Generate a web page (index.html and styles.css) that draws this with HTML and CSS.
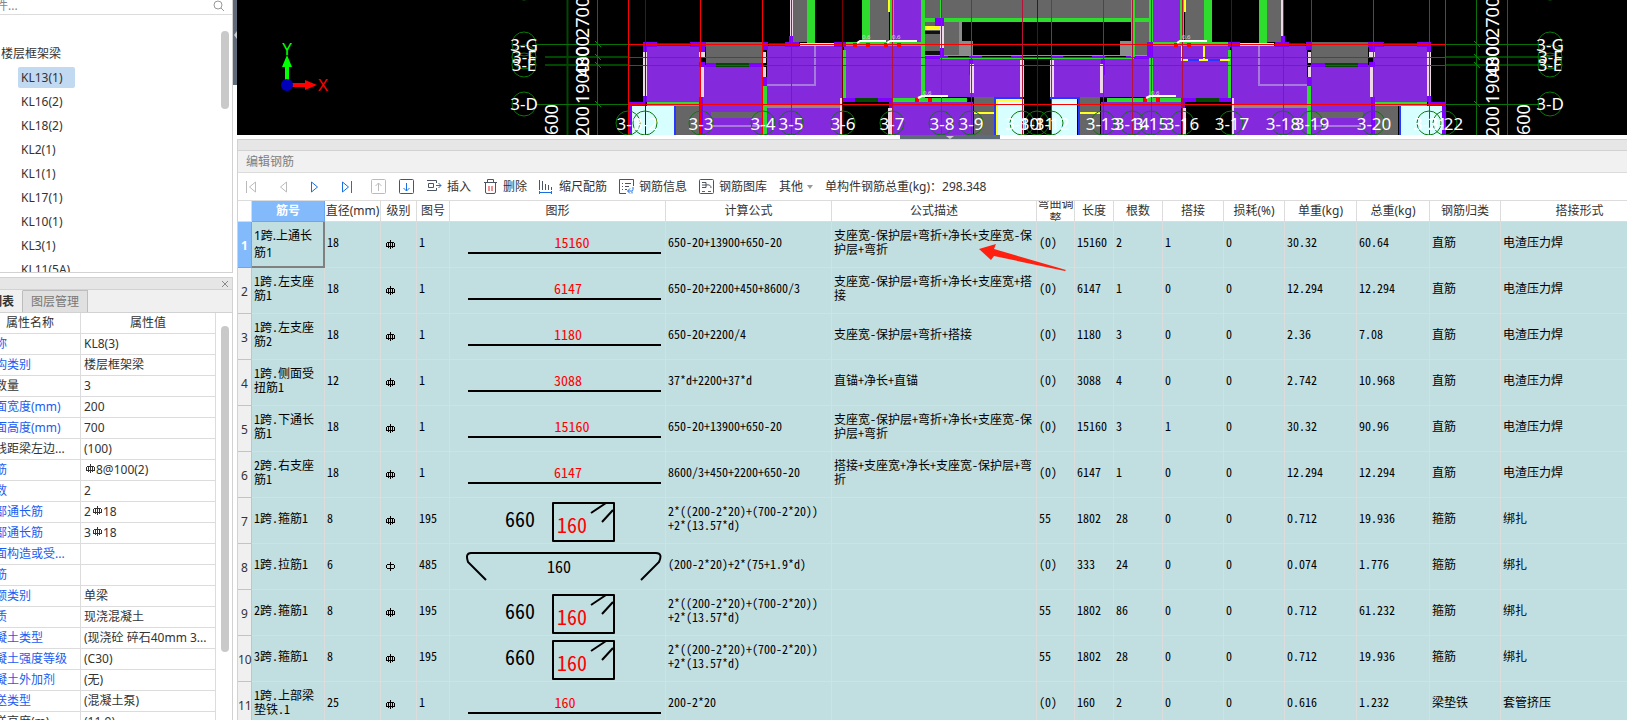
FILE: index.html
```html
<!DOCTYPE html>
<html lang="zh-CN">
<head>
<meta charset="utf-8">
<title>编辑钢筋</title>
<link rel="stylesheet" href="styles.css">
</head>
<body>
<svg class="defs" aria-hidden="true">
  <defs>
  <path id="rebar3" d="M4.500 0v9M1 2.500h7M.5 3v3M8.500 3v3M0 6.500h9M2.500 3v5M6.500 3v5"/>
  <path id="rebar1" d="M4.500 0v9M1 2.500h7M.5 3v3M8.500 3v3M1 6.500h7"/>
  <path id="bar" d="M18 31H211"/>
  <path id="stirrup" stroke-linejoin="round" d="M103 5H164V43H103ZM141 15L156 5M152 24L163 12"/>
  </defs>
</svg>
<aside class="side">
  <section class="tree">
    <div class="search"><input type="text" aria-label="搜索构件" placeholder="件...">
      <svg class="glass" viewBox="0 0 12 12"><circle cx="5" cy="5" r="4"/><path d="M8 8l3 3"/></svg></div>
    <div class="treebody">
      <ul class="items">
        <li class="group">楼层框架梁</li>
        <li><a href="#" class="sel">KL13(1)</a></li>
        <li><a href="#">KL16(2)</a></li>
        <li><a href="#">KL18(2)</a></li>
        <li><a href="#">KL2(1)</a></li>
        <li><a href="#">KL1(1)</a></li>
        <li><a href="#">KL17(1)</a></li>
        <li><a href="#">KL10(1)</a></li>
        <li><a href="#">KL3(1)</a></li>
        <li><a href="#">KL11(5A)</a></li>
      </ul>
      <div class="track"><div class="thumb t1"></div></div>
    </div>
  </section>
  <section class="props">
    <div class="closebar"><button class="close" aria-label="关闭"><svg viewBox="0 0 8 8"><path d="M1 1l6 6M7 1L1 7"/></svg></button></div>
    <div class="tabs"><button class="tab on">列表</button><button class="tab">图层管理</button></div>
    <div class="propbody">
      <table class="ptable">
        <thead><tr><th>属性名称</th><th>属性值</th></tr></thead>
        <tbody>
        <tr><td>称</td><td>KL8(3)</td></tr>
        <tr><td>构类别</td><td>楼层框架梁</td></tr>
        <tr><td class="k">数量</td><td>3</td></tr>
        <tr><td>面宽度(mm)</td><td>200</td></tr>
        <tr><td>面高度(mm)</td><td>700</td></tr>
        <tr><td class="k">线距梁左边...</td><td>(100)</td></tr>
        <tr><td>筋</td><td><svg class="rb"><use href="#rebar3"/></svg>8@100(2)</td></tr>
        <tr><td>数</td><td>2</td></tr>
        <tr><td>部通长筋</td><td>2<svg class="rb"><use href="#rebar3"/></svg>18</td></tr>
        <tr><td>部通长筋</td><td>3<svg class="rb"><use href="#rebar3"/></svg>18</td></tr>
        <tr><td>面构造或受...</td><td></td></tr>
        <tr><td>筋</td><td></td></tr>
        <tr><td>额类别</td><td>单梁</td></tr>
        <tr><td>质</td><td>现浇混凝土</td></tr>
        <tr><td>凝土类型</td><td>(现浇砼 碎石40mm 3...</td></tr>
        <tr><td>凝土强度等级</td><td>(C30)</td></tr>
        <tr><td>凝土外加剂</td><td>(无)</td></tr>
        <tr><td>送类型</td><td>(混凝土泵)</td></tr>
        <tr><td class="k">送高度(m)</td><td>(11.9)</td></tr>
        </tbody>
      </table>
      <div class="track"><div class="thumb t2"></div></div>
    </div>
  </section>
</aside>
<div class="gutter"><div class="grip"><svg viewBox="0 0 4 8"><path d="M4 0v8L1 4z"/></svg></div></div>
<main class="main">
<svg class="cad" viewBox="237 0 1390 135" preserveAspectRatio="xMidYMid slice">
  <rect x="237" width="1390" height="135" fill="#000"/>
  <g id="wing">
    <path class="gy" d="M793 0h14v42h-14zM870 0h19v42h-19zM676 104h25v31h-25zM974 97h22v38h-22z"/>
    <path class="pu" d="M645 45h55v57h-55zM701 66h63v69h-63zM767 46h75v89h-75zM844 46h78v52h-78zM894 0h27v42h-27zM925 59h97v38h-97zM893 102h80v33h-80z"/>
    <path class="gy" d="M706 42h57v22h-57zM711 112h52v6h-52z"/>
    <path fill="#d8ffff" d="M630 106h44v29h-44zM997 99h26v36h-26z"/>
    <path fill="#8000ff" d="M628 102h18v4h-18zM628 102h4v33h-4zM643 42h14v5h-14zM643 42h4v60h-4zM690 42h16v5h-16zM699 47h6v5h-6zM699 62h6v5h-6zM699 97h4v38h-4zM706 63h10v4h-10zM749 63h14v4h-14zM762 42h6v8h-6zM762 77h5v10h-5zM785 42h14v5h-14zM789 36h4v10h-4zM834 42h12v5h-12zM843 98h50v4h-50zM889 98h4v10h-4zM925 55h23v4h-23zM969 55h13v4h-13zM969 55h4v20h-4zM1011 55h12v4h-12z"/>
    <path fill="#054805" d="M657 43h34v3h-34zM769 43h16v3h-16zM716 63h33v4h-33zM855 98h23v4h-23z"/>
    <path fill="#000" d="M846 102h42v33h-42z"/>
    <path class="gr" d="M807 0h8v43h-8zM862 0h8v42h-8zM890 0h4v42h-4zM921 0h4v98h-4zM842 50h4v48h-4zM763 86h4v49h-4zM647 102h52v4h-52zM893 98h74v4h-74zM846 42h75v4h-75zM925 18h113v4h-113zM925 55h113v1h-113zM940 58h98v1h-98z"/>
    <path fill="#99857d" d="M767 104h73v4h-73z"/>
    <path fill="#eed8e8" d="M643 52h4v44h-4zM699 52h6v5h-6zM700 67h4v30h-4zM763 52h3v11h-3zM763 67h3v10h-3zM790 0h3v36h-3zM800 43h34v3h-34zM840 98h3v37h-3zM888 108h4v27h-4zM970 64h4v29h-4zM1020 60h4v37h-4z"/>
    <path fill="none" stroke="#a779dd" stroke-width="2" d="M767 85h48V46M712 126h51"/>
    <path fill="#ff2" d="M888 0h2v12h-2zM974 112h22v2h-22z"/>
  </g>
  <use href="#wing" transform="matrix(-1 0 0 1 2074 0)"/>
  <path fill="#000" d="M1025 59h24v76h-24zM962 22h168v33H962z"/>
  <path class="gy" d="M925 0h206v18H925zM1135 0h14v18h-14zM925 22h37v33h-37zM1135 22h14v33h-14z"/>
  <path fill="#8b8b8b" d="M959 22h3v33h-3zM962 41h11v14h-11zM1120 41h11v14h-11z"/>
  <path fill="#ff2" d="M925 26h16v4h-16z"/>
  <path fill="#111" d="M925 31h15v3h-15zM925 51h15v4h-15z"/>
  <path fill="#8000ff" d="M935 18h9v8h-9zM940 48h4v10h-4zM1147 42h6v16h-6z"/>
  <path fill="#eed8e8" d="M940 26h4v22h-4z"/>
  <path class="gr" d="M1131 0h4v57h-4zM940 0h2v18h-2z"/>
  <path fill="none" stroke="#2438ff" stroke-width="2" d="M675 106v29M995 135V98h28M1050 98h29v37M1400 106v29M1182 60h48"/>
  <path fill="none" stroke="#ff2" stroke-width="2" d="M997 135V100h26v35M1182 46v14h6M1204 46v14M1199 60h9M1220 60h10"/>
  <path fill="none" stroke="#004800" stroke-width="2" d="M545 57h83M545 65h83M567.5 0v135M1446 57h104M1446 65h104"/>
  <path fill="none" stroke="#087208" d="M536 44.500h93M536 104.500h93M1446 44.500h94M1446 104.500h94M597.500 0v135M1476.500 0v135M1507.500 0v135"/>
  <path fill="none" stroke="#088808" d="M595 41l6 6M595 54l6 6M595 62l6 6M595 101l6 6M1474 41l6 6M1474 54l6 6M1474 62l6 6M1474 101l6 6"/>
  <path fill="none" stroke="#f00" d="M628.500 0v135M700.500 0v135M762.500 0v135M941.500 0v135M1051.500 0v135M1373.500 0v135M1445.500 0v135M628 44.500h818M628 104.500h818"/>
  <path fill="none" stroke="#b8123c" d="M791.500 0v135M892.500 0v135M971.500 0v135M1022.500 0v135M1103.500 0v135M1132.500 0v135M1151.500 0v135M1182.500 0v135M1283.500 0v135M1311.500 0v135M1429.500 0v135M628 57.500h818M628 65.500h818"/>
  <path fill="none" stroke="#700" d="M645.500 0v135M842.500 0v135M1037.500 0v135M1231.500 0v135"/>
  <path fill="#f00" d="M853 43h4v4h-4zM866 43h4v4h-4zM884 43h4v4h-4zM897 43h4v4h-4zM915 98h4v4h-4zM928 98h4v4h-4zM1174 43h4v4h-4zM1187 43h4v4h-4zM1143 98h4v4h-4zM1156 98h4v4h-4z"/>
  <path fill="none" stroke="#fff" stroke-width="2" d="M857 43l3-2h26M887 43l3-2h27M918 98l4-2h26M1177 43l3-2h27M1146 98l4-2h26"/>
  <g class="tiny"><text x="862" y="39">0.6</text><text x="892" y="39">0.6</text><text x="923" y="95">0.6</text><text x="1182" y="39">0.6</text><text x="1151" y="95">0.6</text></g>
  <g class="rings">
    <circle cx="524" cy="44" r="12"/><circle cx="524" cy="57" r="12"/><circle cx="524" cy="65" r="12"/><circle cx="524" cy="104" r="12"/><circle cx="524" cy="-12" r="12"/>
    <circle cx="1550" cy="44" r="12"/><circle cx="1550" cy="57" r="12"/><circle cx="1550" cy="65" r="12"/><circle cx="1550" cy="104" r="12"/><circle cx="1550" cy="-12" r="12"/>
    <circle cx="628" cy="123" r="12"/><circle cx="645" cy="123" r="12"/><circle cx="701" cy="123" r="12"/><circle cx="763" cy="123" r="12"/><circle cx="791" cy="123" r="12"/><circle cx="843" cy="123" r="12"/><circle cx="892" cy="123" r="12"/><circle cx="941" cy="123" r="12"/><circle cx="971" cy="123" r="12"/><circle cx="1022" cy="123" r="12"/><circle cx="1037" cy="123" r="12"/><circle cx="1051" cy="123" r="12"/><circle cx="1103" cy="123" r="12"/><circle cx="1132" cy="123" r="12"/><circle cx="1151" cy="123" r="12"/><circle cx="1182" cy="123" r="12"/><circle cx="1231" cy="123" r="12"/><circle cx="1283" cy="123" r="12"/><circle cx="1311" cy="123" r="12"/><circle cx="1373" cy="123" r="12"/><circle cx="1429" cy="123" r="12"/><circle cx="1445" cy="123" r="12"/>
  </g>
  <g class="lab">
    <text x="524" y="51">3-G</text><text x="524" y="63">3-F</text><text x="524" y="71">3-E</text><text x="524" y="110">3-D</text>
    <text x="1550" y="51">3-G</text><text x="1550" y="63">3-F</text><text x="1550" y="71">3-E</text><text x="1550" y="110">3-D</text>
    <text x="629" y="130">3-1</text><text x="645" y="130">3-2</text><text x="701" y="130">3-3</text><text x="763" y="130">3-4</text><text x="791" y="130">3-5</text><text x="843" y="130">3-6</text><text x="892" y="130">3-7</text><text x="942" y="130">3-8</text><text x="971" y="130">3-9</text><text x="1022" y="130">3-10</text><text x="1037" y="130">3-11</text><text x="1052" y="130">3-12</text><text x="1103" y="130">3-13</text><text x="1132" y="130">3-14</text><text x="1151" y="130">3-15</text><text x="1182" y="130">3-16</text><text x="1232" y="130">3-17</text><text x="1283" y="130">3-18</text><text x="1312" y="130">3-19</text><text x="1374" y="130">3-20</text><text x="1430" y="130">3-21</text><text x="1446" y="130">3-22</text>
  </g>
  <g class="dim">
    <text transform="translate(589 38) rotate(-90)">2700</text><text transform="translate(589 67) rotate(-90)">800</text><text transform="translate(589 77) rotate(-90)">400</text><text transform="translate(589 104) rotate(-90)">1900</text><text transform="translate(589 137) rotate(-90)">200</text>
    <text transform="translate(558 135) rotate(-90)">600</text>
    <text transform="translate(1499 38) rotate(-90)">2700</text><text transform="translate(1499 67) rotate(-90)">800</text><text transform="translate(1499 77) rotate(-90)">400</text><text transform="translate(1499 104) rotate(-90)">1900</text><text transform="translate(1499 137) rotate(-90)">200</text>
    <text transform="translate(1530 135) rotate(-90)">600</text>
  </g>
  <path fill="#0f0" d="M287 55l5 12h-3v14h-4V67h-3z"/>
  <path fill="#f00" d="M317 85l-12 5v-3h-14v-4h14v-3z"/>
  <circle cx="287" cy="85" r="6" fill="#00b"/>
  <text class="axis" x="287" y="55" fill="#0f0">Y</text><text class="axis" x="323" y="91" fill="#f00">X</text>
</svg>
<div class="split"><div class="handle"><svg viewBox="0 0 8 4"><path d="M0 1h8L4 4z"/></svg></div></div>
<section class="editor">
  <div class="strip"></div>
  <h1 class="title">编辑钢筋</h1>
  <div class="toolbar">
    <div class="nav">
      <button aria-label="首条"><svg class="ic off" viewBox="0 0 16 16"><path d="M3.500 2v12M12.500 3v10L6.500 8z"/></svg></button>
      <button aria-label="上一条"><svg class="ic off" viewBox="0 0 16 16"><path d="M11.500 3v10L5.500 8z"/></svg></button>
      <button aria-label="下一条"><svg class="ic blue" viewBox="0 0 16 16"><path d="M4.500 3v10l6-5z"/></svg></button>
      <button aria-label="末条"><svg class="ic blue" viewBox="0 0 16 16"><path d="M3.500 3v10l6-5zM12.500 2v12"/></svg></button>
      <button aria-label="上移"><svg class="ic off" viewBox="0 0 16 16"><rect x=".5" y=".5" width="14" height="14" rx="1"/><path d="M7.500 12V4M4.500 7l3-3 3 3"/></svg></button>
    </div>
    <button aria-label="下移"><svg class="ic" viewBox="0 0 16 16"><rect x=".5" y=".5" width="14" height="14" rx="1"/><path class="b" d="M7.500 4v8M4.500 9l3 3 3-3"/></svg></button>
    <button><svg class="ic" viewBox="0 0 16 16"><path d="M0 1.500h9.500V4M0 11.500h9.500V9M1.500 4.500h5v4h-5z"/><path class="b" d="M9 6.500h5M11.500 4l2.500 2.500L11.500 9"/></svg>插入</button>
    <button><svg class="ic" viewBox="0 0 16 16"><path d="M1 3.500h13M4.500 3V.5h6V3M2.500 4v9q0 1.500 1.500 1.500h7q1.500 0 1.500-1.500V4"/><path class="r" d="M6 7v5M9 7v5"/></svg>删除</button>
    <button><svg class="ic" viewBox="0 0 16 16"><path d="M.5 1v10M3.500 2v9M6.500 5v6M9.500 6v5M12.500 8v3"/><path class="b" d="M0 13.500h13M.5 12v3M12.500 12v3"/></svg>缩尺配筋</button>
    <button><svg class="ic" viewBox="0 0 16 16"><path d="M7 14.500H.5V.5h14V7M3 4.500h1M6 4.500h6M3 7.500h1M6 7.500h4M3 10.500h1M6 10.500h2"/><path class="b" d="M14 8v2.500q0 1.500-1.500 1.500H9M11 9.500L8.500 12l2.500 2.500M13 14.500v-2"/></svg>钢筋信息</button>
    <button><svg class="ic" viewBox="0 0 16 16"><rect x=".5" y=".5" width="14" height="14" rx="1"/><path d="M3 3.500h4v5H3M3 6h4q5-1 5 3"/><path class="b" d="M3 12.500h3M9 12.500h3"/></svg>钢筋图库</button>
    <button class="more">其他<svg viewBox="0 0 6 4"><path d="M0 0h6L3 4z"/></svg></button>
    <span>单构件钢筋总重(kg)：298.348</span>
  </div>
  <div class="gridwrap">
  <table class="grid">
    <colgroup><col class="w14"><col class="w73"><col class="w56"><col class="w36"><col class="w33"><col class="w216"><col class="w166"><col class="w205"><col class="w38"><col class="w39"><col class="w49"><col class="w61"><col class="w61"><col class="w72"><col class="w73"><col class="w71"><col class="w158"></colgroup>
    <thead><tr><th></th><th class="act">筋号</th><th>直径(mm)</th><th>级别</th><th>图号</th><th>图形</th><th>计算公式</th><th>公式描述</th><th><div class="clip">弯曲调整</div></th><th>长度</th><th>根数</th><th>搭接</th><th>损耗(%)</th><th>单重(kg)</th><th>总重(kg)</th><th>钢筋归类</th><th>搭接形式</th></tr></thead>
    <tbody>
    <tr><th class="act">1</th><td class="cur">1跨.上通长筋1</td><td>18</td><td><svg class="st"><use href="#rebar3"/></svg></td><td>1</td><td class="pic"><svg class="fig"><use href="#bar"/><text class="n" x="122" y="26">15160</text></svg></td><td>650-20+13900+650-20</td><td>支座宽-保护层+弯折+净长+支座宽-保护层+弯折</td><td>(0)</td><td>15160</td><td>2</td><td>1</td><td>0</td><td>30.32</td><td>60.64</td><td>直筋</td><td>电渣压力焊</td></tr>
    <tr><th>2</th><td>1跨.左支座筋1</td><td>18</td><td><svg class="st"><use href="#rebar3"/></svg></td><td>1</td><td class="pic"><svg class="fig"><use href="#bar"/><text class="n" x="118" y="26">6147</text></svg></td><td>650-20+2200+450+8600/3</td><td>支座宽-保护层+弯折+净长+支座宽+搭接</td><td>(0)</td><td>6147</td><td>1</td><td>0</td><td>0</td><td>12.294</td><td>12.294</td><td>直筋</td><td>电渣压力焊</td></tr>
    <tr><th>3</th><td>1跨.左支座筋2</td><td>18</td><td><svg class="st"><use href="#rebar3"/></svg></td><td>1</td><td class="pic"><svg class="fig"><use href="#bar"/><text class="n" x="118" y="26">1180</text></svg></td><td>650-20+2200/4</td><td>支座宽-保护层+弯折+搭接</td><td>(0)</td><td>1180</td><td>3</td><td>0</td><td>0</td><td>2.36</td><td>7.08</td><td>直筋</td><td>电渣压力焊</td></tr>
    <tr><th>4</th><td>1跨.侧面受扭筋1</td><td>12</td><td><svg class="st"><use href="#rebar3"/></svg></td><td>1</td><td class="pic"><svg class="fig"><use href="#bar"/><text class="n" x="118" y="26">3088</text></svg></td><td>37*d+2200+37*d</td><td>直锚+净长+直锚</td><td>(0)</td><td>3088</td><td>4</td><td>0</td><td>0</td><td>2.742</td><td>10.968</td><td>直筋</td><td>电渣压力焊</td></tr>
    <tr><th>5</th><td>1跨.下通长筋1</td><td>18</td><td><svg class="st"><use href="#rebar3"/></svg></td><td>1</td><td class="pic"><svg class="fig"><use href="#bar"/><text class="n" x="122" y="26">15160</text></svg></td><td>650-20+13900+650-20</td><td>支座宽-保护层+弯折+净长+支座宽-保护层+弯折</td><td>(0)</td><td>15160</td><td>3</td><td>1</td><td>0</td><td>30.32</td><td>90.96</td><td>直筋</td><td>电渣压力焊</td></tr>
    <tr><th>6</th><td>2跨.右支座筋1</td><td>18</td><td><svg class="st"><use href="#rebar3"/></svg></td><td>1</td><td class="pic"><svg class="fig"><use href="#bar"/><text class="n" x="118" y="26">6147</text></svg></td><td>8600/3+450+2200+650-20</td><td>搭接+支座宽+净长+支座宽-保护层+弯折</td><td>(0)</td><td>6147</td><td>1</td><td>0</td><td>0</td><td>12.294</td><td>12.294</td><td>直筋</td><td>电渣压力焊</td></tr>
    <tr><th>7</th><td>1跨.箍筋1</td><td>8</td><td><svg class="st"><use href="#rebar3"/></svg></td><td>195</td><td class="pic"><svg class="fig"><use href="#stirrup"/><text class="big" x="55" y="29">660</text><text class="big red" x="107" y="35">160</text></svg></td><td>2*((200-2*20)+(700-2*20))<br>+2*(13.57*d)</td><td></td><td>55</td><td>1802</td><td>28</td><td>0</td><td>0</td><td>0.712</td><td>19.936</td><td>箍筋</td><td>绑扎</td></tr>
    <tr><th>8</th><td>1跨.拉筋1</td><td>6</td><td><svg class="st"><use href="#rebar1"/></svg></td><td>485</td><td class="pic"><svg class="fig"><path d="M36 36L18 18Q15 9 21 9H206Q213 9 209 18L191 36"/><text class="mid" x="97" y="29">160</text></svg></td><td>(200-2*20)+2*(75+1.9*d)</td><td></td><td>(0)</td><td>333</td><td>24</td><td>0</td><td>0</td><td>0.074</td><td>1.776</td><td>箍筋</td><td>绑扎</td></tr>
    <tr><th>9</th><td>2跨.箍筋1</td><td>8</td><td><svg class="st"><use href="#rebar3"/></svg></td><td>195</td><td class="pic"><svg class="fig"><use href="#stirrup"/><text class="big" x="55" y="29">660</text><text class="big red" x="107" y="35">160</text></svg></td><td>2*((200-2*20)+(700-2*20))<br>+2*(13.57*d)</td><td></td><td>55</td><td>1802</td><td>86</td><td>0</td><td>0</td><td>0.712</td><td>61.232</td><td>箍筋</td><td>绑扎</td></tr>
    <tr><th>10</th><td>3跨.箍筋1</td><td>8</td><td><svg class="st"><use href="#rebar3"/></svg></td><td>195</td><td class="pic"><svg class="fig"><use href="#stirrup"/><text class="big" x="55" y="29">660</text><text class="big red" x="107" y="35">160</text></svg></td><td>2*((200-2*20)+(700-2*20))<br>+2*(13.57*d)</td><td></td><td>55</td><td>1802</td><td>28</td><td>0</td><td>0</td><td>0.712</td><td>19.936</td><td>箍筋</td><td>绑扎</td></tr>
    <tr><th>11</th><td>1跨.上部梁垫铁.1</td><td>25</td><td><svg class="st"><use href="#rebar3"/></svg></td><td>1</td><td class="pic"><svg class="fig"><use href="#bar"/><text class="n" x="115" y="26">160</text></svg></td><td>200-2*20</td><td></td><td>(0)</td><td>160</td><td>2</td><td>0</td><td>0</td><td>0.616</td><td>1.232</td><td>梁垫铁</td><td>套管挤压</td></tr>
    </tbody>
  </table>
  <svg class="arrow" viewBox="0 0 88 28"><path d="M0 5L17 0l-2 5L87 26l-1 1L15 12l-3 4z"/></svg>
  </div>
</section>
</main>
</body>
</html>
```
FILE: styles.css
```css
* { box-sizing: border-box; }
body { margin: 0; height: 100vh; display: flex; overflow: hidden; background: #fff; color: #333; font: 12px/16px "Noto Sans", "Noto Sans CJK SC", sans-serif; }
button { border: 0; padding: 0; margin: 0; background: none; font: inherit; color: inherit; display: flex; align-items: center; }
table { border-collapse: separate; border-spacing: 0; table-layout: fixed; }
.defs { position: absolute; width: 0; height: 0; }

.side { width: 233px; flex: none; display: flex; flex-direction: column; gap: 4px; }
.tree { height: 273px; flex: none; display: flex; flex-direction: column; border: solid #d2d2d2; border-width: 0 1px 1px 0; overflow: hidden; }
.search { height: 15px; flex: none; display: flex; justify-content: space-between; align-items: flex-end; padding-right: 7px; border-bottom: 1px solid #dcdcdc; }
.search input { border: 0; padding: 0; margin-left: -4px; width: 180px; height: 18px; font: inherit; outline: 0; }
.search input::placeholder { color: #888; }
.glass { width: 12px; height: 12px; margin-bottom: 2px; fill: none; stroke: #999; }
.treebody, .propbody { display: flex; flex: 1; min-height: 0; }
.items { list-style: none; margin: 0; padding: 28px 0 0; width: 216px; }
.items li { height: 24px; padding-left: 18px; }
.items .group { padding: 3px 0 0 1px; }
.items a { display: inline-block; height: 21px; line-height: 21px; padding: 0 12px 0 3px; border-radius: 2px; color: #333; text-decoration: none; }
.items a.sel { background: #c2d9f2; }
.track { flex: 1; padding-left: 5px; }
.thumb { width: 8px; border-radius: 4px; background: #c9c9c9; }
.t1 { height: 78px; margin-top: 16px; }
.t2 { height: 326px; margin-top: 13px; }

.props { flex: 1; min-height: 0; display: flex; flex-direction: column; border: solid #d2d2d2; border-width: 1px 1px 0 0; overflow: hidden; }
.closebar { height: 12px; flex: none; background: #e6e6e6; border-bottom: 1px solid #d2d2d2; display: flex; justify-content: flex-end; padding-right: 3px; }
.close svg { width: 8px; height: 8px; stroke: #888; }
.tabs { height: 23px; flex: none; display: flex; background: #f0f0f0; border-bottom: 1px solid #d2d2d2; }
.tab { border: solid #bdbdbd; border-width: 1px 1px 0 0; background: #e0e0e0; color: #777; padding: 0 8px; }
.tab.on { background: #f0f0f0; color: #333; font-weight: bold; width: 23px; padding: 0; text-indent: -10px; border-top-color: #f0f0f0; }
.ptable { width: 216px; }
.ptable th, .ptable td { height: 21px; padding: 0 0 0 3px; border: solid #dcdcdc; border-width: 0 1px 1px 0; font-weight: normal; text-align: left; white-space: nowrap; overflow: hidden; }
.ptable th { text-align: center; padding: 0; }
.ptable th:first-child { width: 81px; padding-right: 20px; }
.ptable td:first-child { color: #1a5cf0; padding: 0; text-indent: -5px; }
.ptable td.k:first-child { color: #333; }
.rb { width: 9px; height: 9px; margin: 0 1px 1px 2px; fill: none; stroke: #333; shape-rendering: crispEdges; }

.gutter { width: 4px; flex: none; }
.grip { height: 85px; background: #5f6b78; display: flex; padding-top: 31px; }
.grip svg { width: 4px; height: 8px; fill: #ccc; }
.main { flex: 1; min-width: 0; display: flex; flex-direction: column; }
.cad { width: 100%; height: 135px; flex: none; display: block; }
.cad text { font-family: "Noto Sans", sans-serif; }
.gy { fill: #666; }
.pu { fill: #8429db; }
.gr { fill: #2ddc2d; }
.rings { fill: none; stroke: #087a08; }
.lab { font-size: 17px; fill: #fff; text-anchor: middle; }
.dim { font-size: 18px; fill: #fff; }
.tiny { font-size: 6px; fill: #ddd; }
.axis { font-size: 17px; text-anchor: middle; }

.split { height: 4px; flex: none; }
.handle { width: 100px; height: 4px; margin-left: 663px; background: #5f6b78; display: flex; justify-content: center; }
.handle svg { width: 8px; height: 4px; fill: #ccc; }
.editor { flex: 1; min-height: 0; display: flex; flex-direction: column; border: solid #d2d2d2; border-width: 1px 0 0 1px; }
.strip { height: 11px; flex: none; background: #e6e6e6; border-bottom: 1px solid #d2d2d2; }
.title { margin: 0; flex: none; height: 22px; padding-left: 8px; background: #f1f1f1; border-bottom: 1px solid #dcdcdc; color: #808080; font-size: 12px; font-weight: normal; line-height: 21px; }
.toolbar { height: 28px; flex: none; display: flex; align-items: center; gap: 12px; padding-left: 5px; border-bottom: 1px solid #dcdcdc; white-space: nowrap; }
.toolbar button { gap: 4px; }
.nav { display: flex; gap: 16px; }
.ic { width: 16px; height: 16px; fill: none; stroke: #4b5563; flex: none; }
.off { stroke: #bbb; }
.blue, .ic .b { stroke: #1a6fe0; }
.ic .r { stroke: #e02020; }
.more svg { width: 6px; height: 4px; fill: #999; }

.gridwrap { position: relative; flex: 1; min-height: 0; overflow: hidden; }
.grid { width: 1421px; color: #000; }
.w14 { width: 14px; } .w73 { width: 73px; } .w56 { width: 56px; } .w36 { width: 36px; } .w33 { width: 33px; }
.w216 { width: 216px; } .w166 { width: 166px; } .w205 { width: 205px; } .w38 { width: 38px; } .w39 { width: 39px; }
.w49 { width: 49px; } .w61 { width: 61px; } .w72 { width: 72px; } .w71 { width: 71px; } .w158 { width: 158px; }
.grid th { padding: 0; font-weight: normal; color: #333; border: solid #dcdcdc; border-width: 0 1px 1px 0; white-space: nowrap; }
.grid thead th { height: 21px; line-height: 20px; }
.grid .clip { height: 20px; line-height: 15px; overflow: hidden; white-space: normal; display: flex; align-items: center; text-align: center; }
.grid tbody th { background: #f0f0f0; border-color: #c4c4c4; padding-top: 3px; }
.grid tbody th, .grid td { height: 46px; }
.grid thead th.act, .grid tbody th.act { background: #82bafb; color: #fff; font-weight: bold; border-color: #6aa7f0; }
.grid td { padding: 0 2px 5px 2px; background: #c1dee0; border: solid #dcdcdc; border-width: 0 1px 1px 0; font: 12px/14px "Noto Sans Mono CJK SC", "Noto Sans CJK SC", monospace; }
.grid td.cur { border: solid #808080; border-width: 0 2px 2px 0; padding-bottom: 0; line-height: 17px; font-family: "Noto Sans", "Noto Sans CJK SC", sans-serif; }
.grid td.pic { padding: 0; }
.fig { display: block; width: 215px; height: 45px; overflow: hidden; fill: none; stroke: #000; stroke-width: 2; }
.fig text { stroke: none; fill: #000; text-anchor: start; font-size: 20px; }
.fig .n { fill: #f00; font-size: 14px; text-anchor: middle; }
.fig .mid { font-size: 16px; }
.fig .red { fill: #f00; }
.st { display: block; width: 9px; height: 9px; margin: 4px 0 0 3px; fill: none; stroke: #000; shape-rendering: crispEdges; }
.arrow { position: absolute; left: 741px; top: 43px; width: 88px; height: 28px; fill: #ff2010; }
```
